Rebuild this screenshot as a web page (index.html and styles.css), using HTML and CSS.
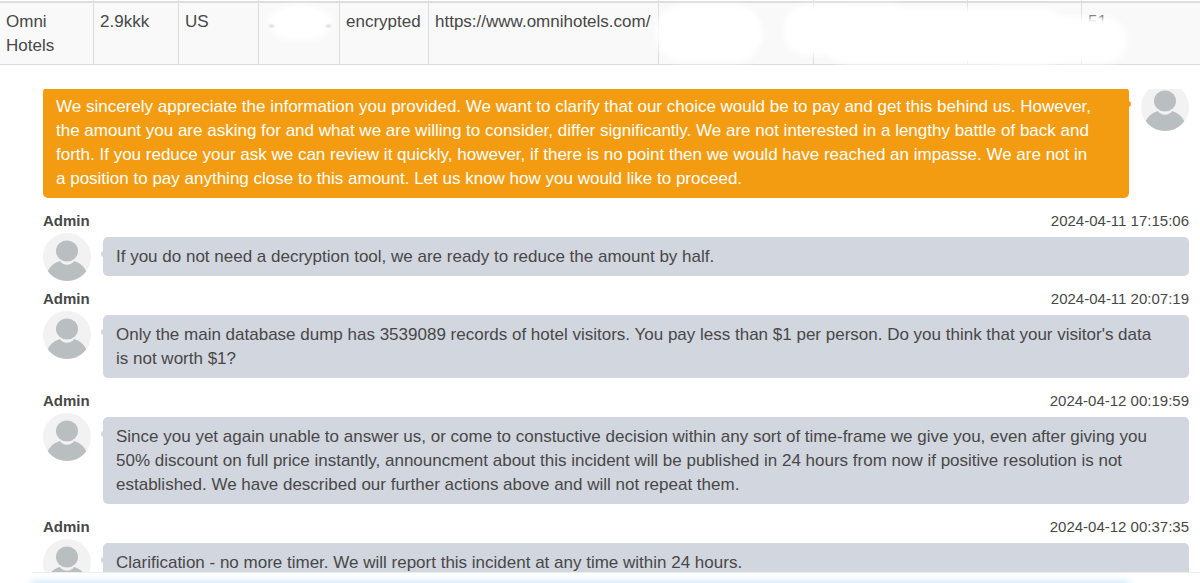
FILE: index.html
```html
<!DOCTYPE html>
<html lang="en">
<head>
<meta charset="utf-8">
<title>Chat</title>
<link rel="stylesheet" href="styles.css">
</head>
<body>
<svg class="symbols" aria-hidden="true">
  <symbol id="person" viewBox="0 0 48 48">
    <clipPath id="disc"><circle cx="24" cy="24" r="24"/></clipPath>
    <g clip-path="url(#disc)">
      <rect width="48" height="48" fill="#f2f2f2"/>
      <ellipse cx="24" cy="18" rx="11" ry="10.500" fill="#b9bec1"/>
      <path d="M3 43C5 35 10 30 17 28C20 33 28 33 31 28C38 30 43 35 45 43L36 49H12Z" fill="#b9bec1"/>
    </g>
  </symbol>
</svg>
<div class="page">
  <div class="record">
    <table class="grid">
      <colgroup><col class="c1"><col class="c2"><col class="c3"><col class="c4"><col class="c5"><col class="c6"><col class="c7"><col class="c8"><col class="c9"><col></colgroup>
      <thead><tr><td></td><td></td><td></td><td></td><td></td><td></td><td></td><td></td><td></td><td></td></tr></thead>
      <tbody><tr>
        <td>Omni Hotels</td><td>2.9kkk</td><td>US</td><td></td><td>encrypted</td><td>https://www.omnihotels.com/</td><td></td><td></td><td></td><td>51</td>
      </tr></tbody>
    </table>
    <span class="smudge s1"></span><span class="smudge s2"></span><span class="smudge s3"></span><span class="smudge s4"></span><span class="smudge s5"></span>
    <span class="trace t1"></span><span class="trace t2"></span>
  </div>
  <main class="chat">
    <article class="msg own">
      <div class="body">
        <p class="bubble">We sincerely appreciate the information you provided. We want to clarify that our choice would be to pay and get this behind us. However, the amount you are asking for and what we are willing to consider, differ significantly. We are not interested in a lengthy battle of back and forth. If you reduce your ask we can review it quickly, however, if there is no point then we would have reached an impasse. We are not in a position to pay anything close to this amount. Let us know how you would like to proceed.</p>
        <svg class="avatar"><use href="#person"/></svg>
      </div>
    </article>
    <article class="msg">
      <header class="meta"><b>Admin</b><time>2024-04-11 17:15:06</time></header>
      <div class="body"><svg class="avatar"><use href="#person"/></svg>
        <p class="bubble">If you do not need a decryption tool, we are ready to reduce the amount by half.</p></div>
    </article>
    <article class="msg">
      <header class="meta"><b>Admin</b><time>2024-04-11 20:07:19</time></header>
      <div class="body"><svg class="avatar"><use href="#person"/></svg>
        <p class="bubble">Only the main database dump has 3539089 records of hotel visitors. You pay less than $1 per person. Do you think that your visitor's data is not worth $1?</p></div>
    </article>
    <article class="msg">
      <header class="meta"><b>Admin</b><time>2024-04-12 00:19:59</time></header>
      <div class="body"><svg class="avatar"><use href="#person"/></svg>
        <p class="bubble">Since you yet again unable to answer us, or come to constuctive decision within any sort of time-frame we give you, even after giving you 50% discount on full price instantly, announcment about this incident will be published in 24 hours from now if positive resolution is not established. We have described our further actions above and will not repeat them.</p></div>
    </article>
    <article class="msg">
      <header class="meta"><b>Admin</b><time>2024-04-12 00:37:35</time></header>
      <div class="body"><svg class="avatar"><use href="#person"/></svg>
        <p class="bubble">Clarification - no more timer. We will report this incident at any time within 24 hours.</p></div>
    </article>
  </main>
  <footer class="composer"><div class="glow"></div></footer>
</div>
</body>
</html>
```
FILE: styles.css
```css
* { box-sizing: border-box; }
body {
  margin: 0;
  background: #fff;
  color: #484848;
  font: 17px/24px "Liberation Sans", Arial, sans-serif;
}
.symbols { position: absolute; width: 0; height: 0; }
.page { display: flex; flex-direction: column; height: 100vh; overflow: hidden; }

.record { position: relative; flex: none; overflow: hidden; }
.grid { width: 100%; table-layout: fixed; border-collapse: separate; border-spacing: 0; }
.grid td { padding: 7px 0 6px 6px; border-right: 1px solid #ddd; border-bottom: 1px solid #ddd; vertical-align: top; }
.grid td:last-child { border-right: 0; }
.grid thead td { height: 3px; padding: 0; border-bottom: 2px solid #ddd; }
.grid tbody { background: #f9f9f9; }
.c1 { width: 94px; }
.c2 { width: 85px; }
.c3 { width: 80px; }
.c4 { width: 81px; }
.c5 { width: 89px; }
.c6 { width: 230px; }
.c7 { width: 155px; }
.c8 { width: 154px; }
.c9 { width: 114px; }
.smudge { position: absolute; background: #fff; border-radius: 30px; filter: blur(3px); }
.s1 { left: 268px; top: 5px; width: 64px; height: 36px; border-radius: 50%; }
.s2 { left: 655px; top: 5px; width: 108px; height: 57px; }
.s3 { left: 783px; top: 5px; width: 130px; height: 50px; }
.s4 { left: 820px; top: 8px; width: 250px; height: 56px; }
.s5 { left: 980px; top: 17px; width: 147px; height: 46px; }
.trace { position: absolute; height: 2px; border-radius: 1px; background: #ccc; filter: blur(1px); }
.t1 { left: 269px; top: 25px; width: 5px; }
.t2 { left: 326px; top: 25px; width: 5px; }

.chat { flex: 1; min-height: 0; overflow: hidden; margin: 24px 0 0 32px; padding: 0 11px; border-bottom: 1px solid #eee; }
.msg { margin-bottom: 13px; }
.own { margin-top: -6px; }
.meta { display: flex; justify-content: space-between; margin-bottom: 2px; font-size: 15px; line-height: 20px; }
.body { display: flex; align-items: flex-start; gap: 12px; }
.avatar { flex: none; width: 48px; height: 48px; margin-bottom: -8px; }
.bubble {
  position: relative;
  flex: 1;
  margin: 4px 0 0;
  padding: 8px 30px 7px 13px;
  border-radius: 5px;
  background: #d2d6df;
}
.bubble::before {
  content: "";
  position: absolute;
  top: 14px;
  left: -2px;
  width: 4px;
  height: 6px;
  border-radius: 3px 0 0 3px;
  background: inherit;
}
.own .bubble { background: #f39c12; color: #fff; }
.own .bubble::before { left: auto; right: -2px; border-radius: 0 3px 3px 0; }

.composer { flex: none; display: flex; height: 10px; padding: 0 72px 0 32px; }
.glow { flex: 1; height: 30px; margin-top: 10px; box-shadow: 0 0 8px 1px #c4e2f7; }
```
